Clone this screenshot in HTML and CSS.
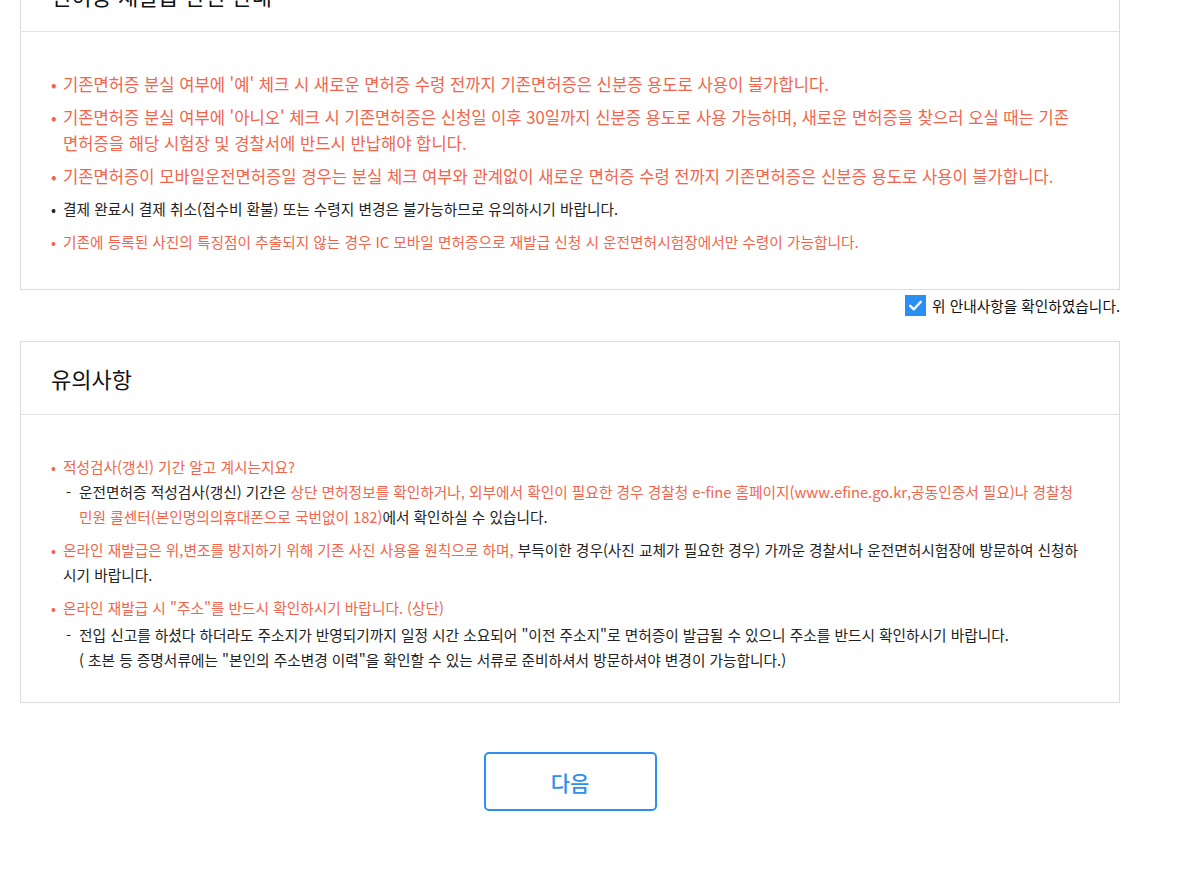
FILE: index.html
```html
<!DOCTYPE html>
<html lang="ko">
<head>
<meta charset="utf-8">
<title>면허증 재발급 관련 안내</title>
<link rel="stylesheet" href="styles.css">
</head>
<body>
<div class="page">
  <section class="panel panel-first">
    <h2 class="panel-title">면허증 재발급 관련 안내</h2>
    <ul class="notes notes-lg">
      <li class="red big">기존면허증 분실 여부에 '예' 체크 시 새로운 면허증 수령 전까지 기존면허증은 신분증 용도로 사용이 불가합니다.</li>
      <li class="red big">기존면허증 분실 여부에 '아니오' 체크 시 기존면허증은 신청일 이후 30일까지 신분증 용도로 사용 가능하며, 새로운 면허증을 찾으러 오실 때는 기존 면허증을 해당 시험장 및 경찰서에 반드시 반납해야 합니다.</li>
      <li class="red big">기존면허증이 모바일운전면허증일 경우는 분실 체크 여부와 관계없이 새로운 면허증 수령 전까지 기존면허증은 신분증 용도로 사용이 불가합니다.</li>
      <li class="dark">결제 완료시 결제 취소(접수비 환불) 또는 수령지 변경은 불가능하므로 유의하시기 바랍니다.</li>
      <li class="red">기존에 등록된 사진의 특징점이 추출되지 않는 경우 IC 모바일 면허증으로 재발급 신청 시 운전면허시험장에서만 수령이 가능합니다.</li>
    </ul>
  </section>

  <label class="confirm">
    <span class="checkbox"><svg viewBox="0 0 21 21" width="21" height="21"><rect width="21" height="21" fill="#2b8ef2"/><path d="M5.2 10.8 L8.9 14.3 L15.8 6.8" fill="none" stroke="#fff" stroke-width="2.4" stroke-linecap="round" stroke-linejoin="round"/></svg></span>
    <span class="confirm-text">위 안내사항을 확인하였습니다.</span>
  </label>

  <section class="panel">
    <h2 class="panel-title">유의사항</h2>
    <ul class="notes notes-sm">
      <li class="red">적성검사(갱신) 기간 알고 계시는지요?
        <ul class="sub">
          <li>운전면허증 적성검사(갱신) 기간은 <span class="hl">상단 면허정보를 확인하거나, 외부에서 확인이 필요한 경우 경찰청 e-fine 홈페이지(www.efine.go.kr,공동인증서 필요)나 경찰청 민원 콜센터(본인명의의휴대폰으로 국번없이 182)</span>에서 확인하실 수 있습니다.</li>
        </ul>
      </li>
      <li class="red">온라인 재발급은 위,변조를 방지하기 위해 기존 사진 사용을 원칙으로 하며,<span class="plain"> 부득이한 경우(사진 교체가 필요한 경우) 가까운 경찰서나 운전면허시험장에 방문하여 신청하시기 바랍니다.</span></li>
      <li class="red">온라인 재발급 시 "주소"를 반드시 확인하시기 바랍니다. (상단)
        <ul class="sub">
          <li>전입 신고를 하셨다 하더라도 주소지가 반영되기까지 일정 시간 소요되어 "이전 주소지"로 면허증이 발급될 수 있으니 주소를 반드시 확인하시기 바랍니다.<br>( 초본 등 증명서류에는 "본인의 주소변경 이력"을 확인할 수 있는 서류로 준비하셔서 방문하셔야 변경이 가능합니다.)</li>
        </ul>
      </li>
    </ul>
  </section>

  <div class="actions">
    <button type="button" class="btn-next">다음</button>
  </div>
</div>
</body>
</html>
```

FILE: styles.css
```css
* { box-sizing: border-box; }

html, body {
  margin: 0;
  padding: 0;
  background: #fff;
}

body {
  font-family: "Noto Sans CJK KR", "Noto Sans", sans-serif;
  color: #222;
  font-size: 14.7px;
}

.page {
  width: 1100px;
  margin: 0 0 0 20px;
  padding-bottom: 60px;
}

.panel {
  border: 1px solid #dcdcdc;
  background: #fff;
}

.panel-first {
  margin-top: -42px;
}

.panel-title {
  margin: 0;
  height: 73px;
  padding: 0 30px;
  display: flex;
  align-items: center;
  font-size: 22px;
  font-weight: 400;
  color: #111;
  border-bottom: 1px solid #e3e3e3;
}

.notes {
  list-style: none;
  margin: 0;
}

.notes-lg {
  padding: 39px 34px 34px 30px;
}

.notes-sm {
  padding: 39px 34px 30px 30px;
}

.notes > li {
  padding-left: 12px;
  text-indent: -12px;
}

.notes-lg > li {
  margin-bottom: 7px;
}

.notes-sm > li {
  margin-bottom: 8px;
}

.notes > li:last-child {
  margin-bottom: 0;
}

.notes > li::before {
  content: "•";
  display: inline-block;
  width: 12px;
  text-indent: 0;
}

.notes-lg > li {
  line-height: 26px;
  font-size: 14.7px;
}

.notes-lg > li.big {
  font-size: 16.6px;
}

.notes-sm > li {
  line-height: 25px;
  font-size: 14.7px;
}

.red { color: #f2654c; }
.dark { color: #222; }
.plain { color: #222; }
.hl { color: #f2654c; }

.sub {
  list-style: none;
  margin: 0;
  padding: 0;
  text-indent: 0;
}

.notes-sm > li:last-child .sub {
  margin-top: 2px;
}

.sub > li {
  color: #222;
  padding-left: 16px;
  text-indent: -13px;
}

.sub > li::before {
  content: "-";
  display: inline-block;
  width: 13px;
  text-indent: 0;
}

.confirm {
  display: flex;
  justify-content: flex-end;
  align-items: center;
  gap: 6px;
  margin-top: 4px;
  height: 22px;
  cursor: pointer;
}

.checkbox {
  display: block;
  width: 21px;
  height: 21px;
}

.checkbox svg { display: block; }

.confirm-text {
  font-size: 14.7px;
  color: #111;
}

.panel + .confirm + .panel {
  margin-top: 25px;
}

.actions {
  display: flex;
  justify-content: center;
  margin-top: 49px;
}

.btn-next {
  width: 173px;
  height: 59px;
  border: 2px solid #2f8ff0;
  border-radius: 5px;
  background: #fff;
  color: #2f8ff0;
  font-family: "Noto Sans CJK KR", "Noto Sans", sans-serif;
  font-size: 21px;
  font-weight: 500;
  cursor: pointer;
}
```
